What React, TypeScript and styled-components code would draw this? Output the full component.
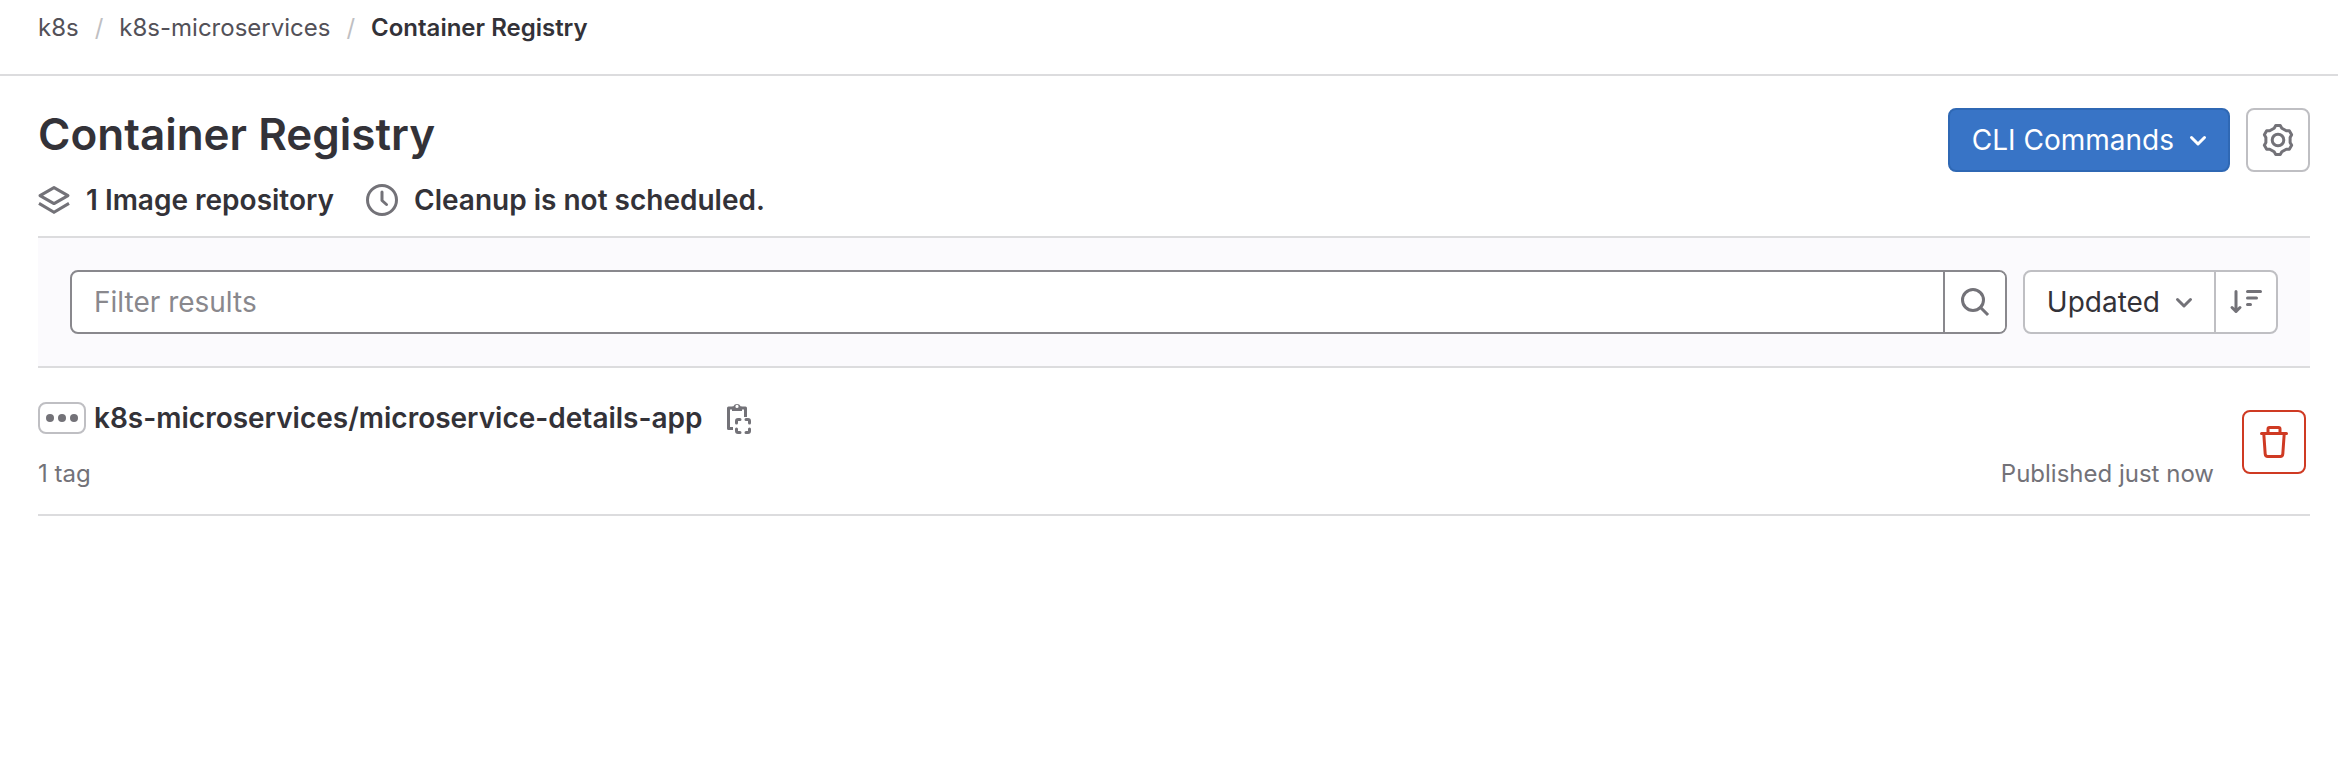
import React from "react";
import styled, { createGlobalStyle, css } from "styled-components";

const GlobalStyle = createGlobalStyle`
  *, *::before, *::after { box-sizing: border-box; }
  body {
    margin: 0;
    background: #fff;
    color: #333238;
    font-family: Inter, "Noto Sans", sans-serif;
    font-size: 28px;
    line-height: 40px;
  }
  button, input { font: inherit; color: inherit; }
`;

const TopBar = styled.nav`
  padding: 8px 38px 26px;
  border-bottom: 2px solid #dcdcde;
`;

const Crumbs = styled.ol`
  display: flex;
  gap: 16px;
  margin: 0;
  padding: 0;
  list-style: none;
  font-size: 24px;
  line-height: 40px;
`;

const Crumb = styled.li`
  display: flex;
  gap: 16px;

  & + &::before {
    content: "/";
    color: #bfbfc3;
  }
`;

const CrumbLink = styled.a<{ $current?: boolean }>`
  color: ${(p) => (p.$current ? "#333238" : "#535158")};
  font-weight: ${(p) => (p.$current ? 600 : 400)};
  text-decoration: none;
`;

const Main = styled.main`
  padding: 32px 28px 0 38px;
`;

const Header = styled.header`
  display: flex;
  justify-content: space-between;
  align-items: flex-start;
  padding-bottom: 16px;
`;

const Title = styled.h1`
  margin: 0;
  font-size: 44px;
  font-weight: 600;
  line-height: 52px;
`;

const MetaList = styled.div`
  display: flex;
  gap: 32px;
  margin-top: 20px;
`;

const Meta = styled.span`
  display: flex;
  align-items: center;
  gap: 16px;
  font-weight: 600;
  line-height: 40px;
`;

const Actions = styled.div`
  display: flex;
  gap: 16px;
`;

const Button = styled.button<{ $variant?: "confirm" | "danger" | "default"; $icon?: boolean }>`
  display: inline-flex;
  align-items: center;
  justify-content: center;
  gap: 8px;
  height: 64px;
  padding: 0 14px 0 22px;
  border: 2px solid #bfbfc3;
  border-radius: 8px;
  background: #fff;
  cursor: pointer;

  ${(p) => p.$icon && css`width: 64px; padding: 0;`}
  ${(p) => p.$variant === "confirm" && css`
    border-color: #2f68b4;
    background: #3874c6;
    color: #fff;
  `}
  ${(p) => p.$variant === "danger" && css`border-color: #cf3a23;`}
`;

const FilterBar = styled.form`
  display: flex;
  gap: 16px;
  padding: 32px;
  border: solid #dcdcde;
  border-width: 2px 0;
  background: #fbfafd;
`;

const SearchGroup = styled.div`
  display: flex;
  flex: 1;
  height: 64px;
  border: 2px solid #89888d;
  border-radius: 8px;
  background: #fff;
  overflow: hidden;
`;

const SearchInput = styled.input`
  flex: 1;
  min-width: 0;
  padding: 0 22px;
  border: 0;
  outline: 0;
  background: transparent;

  &::placeholder { color: #89888d; opacity: 1; }
`;

const SearchButton = styled.button`
  display: flex;
  align-items: center;
  justify-content: center;
  width: 62px;
  padding: 0;
  border: 0;
  border-left: 2px solid #89888d;
  background: #fff;
`;

const SortGroup = styled.div`
  display: flex;

  ${Button}:first-child { border-radius: 8px 0 0 8px; }
  ${Button}:last-child { border-radius: 0 8px 8px 0; margin-left: -2px; }
`;

const Repository = styled.article`
  display: flex;
  align-items: center;
  gap: 28px;
  padding: 24px 4px 22px 0;
  border-bottom: 2px solid #dcdcde;
`;

const Details = styled.div`
  flex: 1;
  min-width: 0;
  padding-top: 6px;
`;

const NameRow = styled.div`
  display: flex;
  align-items: center;
  gap: 8px;
  height: 40px;
`;

const MoreButton = styled.button`
  display: flex;
  align-items: center;
  justify-content: center;
  width: 48px;
  height: 32px;
  padding: 0;
  border: 2px solid #bfbfc3;
  border-radius: 8px;
  background: #fff;
`;

const NameLink = styled.a`
  color: #333238;
  font-weight: 600;
  text-decoration: none;
`;

const CopyButton = styled.button`
  display: flex;
  margin-left: 12px;
  padding: 0;
  border: 0;
  background: none;
`;

const InfoRow = styled.div`
  display: flex;
  justify-content: space-between;
  margin-top: 18px;
  color: #737278;
  font-size: 24px;
  line-height: 36px;
`;

const Svg = styled.svg`
  flex: none;
  width: 32px;
  height: 32px;
  overflow: visible;
  fill: none;
  stroke: currentColor;
  stroke-width: 1.5;
`;

const Icon = ({ color = "#737278", children }: { color?: string; children: React.ReactNode }) => (
  <Svg viewBox="0 0 16 16" aria-hidden="true" color={color}>
    {children}
  </Svg>
);

const ChevronDown = ({ color }: { color?: string }) => (
  <Icon color={color}>
    <path d="M4.75 6.75 8 10l3.25-3.25" strokeLinecap="round" strokeLinejoin="round" />
  </Icon>
);

// Outline of a cog with six teeth, the first one pointing up.
const cogPoints = [0, 60, 120, 180, 240, 300]
  .flatMap((tooth) =>
    [[6.2, -18], [7.3, -9], [7.3, 9], [6.2, 18]].map(([radius, offset]) => {
      const angle = ((tooth + offset) * Math.PI) / 180;
      return `${(8 + radius * Math.sin(angle)).toFixed(2)},${(8 - radius * Math.cos(angle)).toFixed(2)}`;
    })
  )
  .join(" ");

export default function App() {
  return (
    <>
      <GlobalStyle />
      <TopBar aria-label="Breadcrumb">
        <Crumbs>
          <Crumb><CrumbLink href="#k8s">k8s</CrumbLink></Crumb>
          <Crumb><CrumbLink href="#project">k8s-microservices</CrumbLink></Crumb>
          <Crumb><CrumbLink href="#registry" $current aria-current="page">Container Registry</CrumbLink></Crumb>
        </Crumbs>
      </TopBar>
      <Main>
        <Header>
          <div>
            <Title>Container Registry</Title>
            <MetaList>
              <Meta>
                <Icon>
                  <path d="M8 1.8l7 4-7 4-7-4z" strokeLinejoin="round" />
                  <path d="m.5 9.7 7.5 4.4 7.5-4.4" />
                </Icon>
                1 Image repository
              </Meta>
              <Meta>
                <Icon>
                  <circle cx="8" cy="8" r="7.25" />
                  <path d="M8 4v4.25l2.25 2" strokeLinecap="round" strokeLinejoin="round" />
                </Icon>
                Cleanup is not scheduled.
              </Meta>
            </MetaList>
          </div>
          <Actions>
            <Button type="button" $variant="confirm">CLI Commands<ChevronDown color="#fff" /></Button>
            <Button type="button" $icon aria-label="Configure in settings">
              <Icon>
                <polygon points={cogPoints} strokeLinejoin="round" />
                <circle cx="8" cy="8" r="2.9" />
              </Icon>
            </Button>
          </Actions>
        </Header>
        <FilterBar role="search" onSubmit={(e) => e.preventDefault()}>
          <SearchGroup>
            <SearchInput type="text" placeholder="Filter results" aria-label="Filter results" />
            <SearchButton type="submit" aria-label="Search">
              <Icon>
                <circle cx="7" cy="7" r="5.25" />
                <path d="m10.8 10.8 3.2 3.2" strokeLinecap="square" />
              </Icon>
            </SearchButton>
          </SearchGroup>
          <SortGroup>
            <Button type="button" aria-haspopup="listbox">Updated<ChevronDown /></Button>
            <Button type="button" $icon aria-label="Sort direction">
              <Icon>
                <path d="M3 2.75v10M1 10.75l2 2 2-2M8.75 2.75h6.5M8.75 6h4.5M8.75 9.25h1.5" strokeLinecap="round" strokeLinejoin="round" />
              </Icon>
            </Button>
          </SortGroup>
        </FilterBar>
        <Repository>
          <Details>
            <NameRow>
              <MoreButton type="button" aria-label="Show full path">
                <Icon>
                  <g fill="#737278" stroke="none">
                    <circle cx="2" cy="8" r="2" />
                    <circle cx="8" cy="8" r="2" />
                    <circle cx="14" cy="8" r="2" />
                  </g>
                </Icon>
              </MoreButton>
              <NameLink href="#details">k8s-microservices/microservice-details-app</NameLink>
              <CopyButton type="button" aria-label="Copy image path">
                <Icon>
                  <path d="M5 13.25H2.75V3H5M9 3h2.25v4.5" strokeLinejoin="round" />
                  <path
                    d="M4.5 4.5V3q0-.9.7-.9a2 2 0 0 1 3.6 0q.7 0 .7.9v1.5zM7.8 2.2a.8.8 0 1 0-1.6 0 .8.8 0 0 0 1.6 0z"
                    fill="currentColor"
                    fillRule="evenodd"
                    stroke="none"
                  />
                  <path
                    d="M6.75 10.5V9.5q0-.75.75-.75h1M11.5 8.75h1q.75 0 .75.75v1M13.25 13.5v1q0 .75-.75.75h-1M8.5 15.25h-1q-.75 0-.75-.75v-1"
                    strokeLinecap="round"
                  />
                </Icon>
              </CopyButton>
            </NameRow>
            <InfoRow>
              <span>1 tag</span>
              <span>Published just now</span>
            </InfoRow>
          </Details>
          <Button type="button" $icon $variant="danger" aria-label="Remove repository">
            <Icon color="#cf3a23">
              <path d="M1.75 3.75h12.5M5 3.5V1.5q0-.75.75-.75h4.5q.75 0 .75.75v2M2.9 4l.7 10q.1 1.25 1.3 1.25h6.2q1.2 0 1.3-1.25l.7-10" strokeLinecap="round" />
            </Icon>
          </Button>
        </Repository>
      </Main>
    </>
  );
}
